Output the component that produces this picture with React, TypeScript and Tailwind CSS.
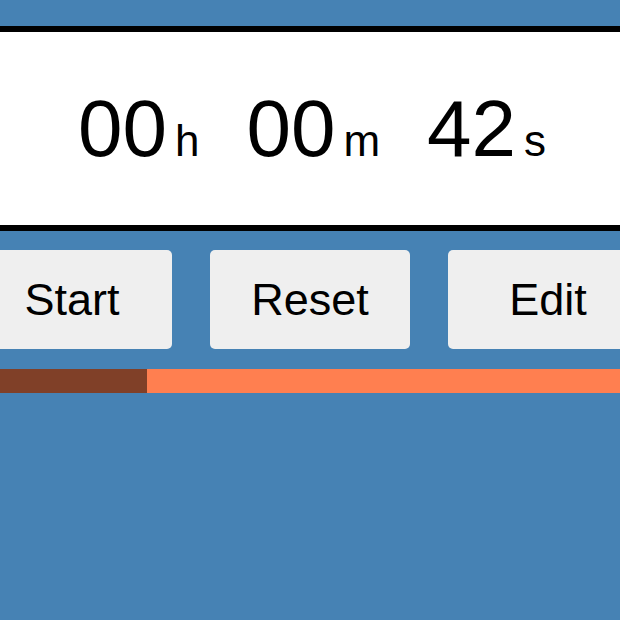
import { useState } from 'react'

function Unit({ value, unit }: { value: string; unit: string }) {
  return (
    <div className="flex items-baseline gap-[8px]">
      <span className="text-[80px] leading-none">{value}</span>
      <span className="text-[44px] leading-none">{unit}</span>
    </div>
  )
}

export default function App() {
  const [seconds] = useState(42)
  const pad = (n: number) => String(n).padStart(2, '0')

  return (
    <div
      className="min-h-screen overflow-hidden bg-[#4682b4] pt-[26px] text-black"
      style={{ fontFamily: '"Liberation Sans", Arial, sans-serif' }}
    >
      <div className="flex h-[205px] items-center justify-center border-y-[6px] border-black bg-white pl-[4px]">
        <div className="flex items-baseline gap-[47px]">
          <Unit value={pad(Math.floor(seconds / 3600))} unit="h" />
          <Unit value={pad(Math.floor(seconds / 60) % 60)} unit="m" />
          <Unit value={pad(seconds % 60)} unit="s" />
        </div>
      </div>

      <div className="mt-[19px] flex justify-center gap-[38px]">
        {['Start', 'Reset', 'Edit'].map((label) => (
          <button
            key={label}
            type="button"
            className="h-[99px] w-[200px] shrink-0 rounded-[5px] bg-[#efefef] text-[45px] text-black"
          >
            {label}
          </button>
        ))}
      </div>

      <div className="mt-[20px] flex h-[24px] bg-[#ff7f50]">
        <div className="h-full w-[147px] bg-[#804028]" />
      </div>
    </div>
  )
}
